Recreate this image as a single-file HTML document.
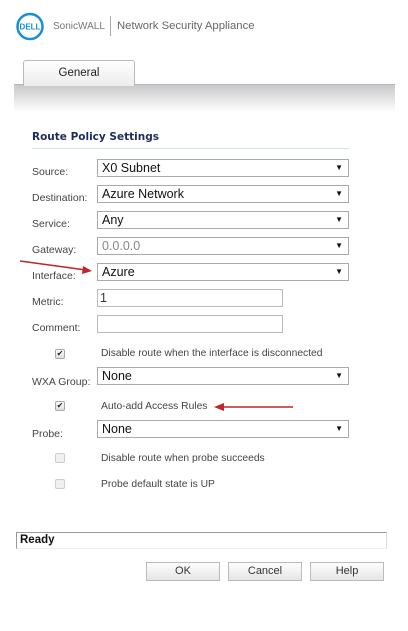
<!DOCTYPE html>
<html><head><meta charset="utf-8"><style>
*{margin:0;padding:0;box-sizing:border-box}
body{width:408px;height:631px;background:#fff;position:relative;overflow:hidden;font-family:"Liberation Sans",sans-serif;color:#333}
.a{position:absolute;white-space:nowrap}
.lbl{font-size:10.5px;color:#444}
.sel{position:absolute;left:97px;width:252px;height:18px;border:1px solid #aaa;background:#fff;font-size:12.5px;color:#111;padding-left:4px;line-height:16px}
.sel:after{content:"\25BC";position:absolute;right:5px;top:0;font-size:8px;color:#111}
.inp{position:absolute;left:97px;width:186px;height:18px;border:1px solid #bbb;background:#fff;font-size:12.5px;padding-left:2px;line-height:16px}
.cb{position:absolute;left:55px;width:10px;height:10px;border:1px solid #aaa;border-radius:2px;background:linear-gradient(#fff,#ddd);font-size:8px;line-height:8px;text-align:center;color:#222;font-family:"DejaVu Sans",sans-serif}
.cb.off{border-color:#ccc;background:#f0f0f0}
.ct{position:absolute;left:101px;font-size:10.3px;color:#444}
.btn{position:absolute;top:562px;width:74px;height:19px;border:1px solid #bbb;background:linear-gradient(#fdfdfd,#e6e6e6);font-size:11px;text-align:center;line-height:17px;color:#333}
</style></head><body>
<svg class="a" style="left:15px;top:12px" width="30" height="30"><circle cx="15" cy="14.5" r="12.5" fill="#fff" stroke="#1a8fd6" stroke-width="2.5"/><text x="15" y="17.5" font-family="Liberation Sans" font-weight="bold" font-size="8" fill="#1a8fd6" text-anchor="middle">DELL</text></svg>
<div class="a" style="left:53px;top:21px;font-size:10px;color:#777">SonicWALL</div>
<div class="a" style="left:110px;top:16px;width:1px;height:20px;background:#aaa"></div>
<div class="a" style="left:117px;top:20px;font-size:11.3px;color:#666">Network Security Appliance</div>
<div class="a" style="left:14px;top:84px;width:381px;height:28px;background:linear-gradient(#c9c9c9,#f4f4f4 80%,#fff);border-top:1px solid #b5b5c5"></div>
<div class="a" style="left:23px;top:60px;width:112px;height:26px;border:1px solid #bbb;border-bottom:none;border-radius:3px 3px 0 0;background:linear-gradient(#fff,#ececec);font-size:11.5px;text-align:center;line-height:24px;color:#222">General</div>
<div class="a" style="left:32px;top:131px;font-size:10.5px;font-weight:bold;color:#1c2d5c;font-family:'DejaVu Sans',sans-serif">Route Policy Settings</div>
<div class="a" style="left:32px;top:148px;width:317px;height:1px;background:#cfe0ee"></div>

<div class="a lbl" style="left:32px;top:166px">Source:</div>
<div class="sel" style="top:159px">X0 Subnet</div>
<div class="a lbl" style="left:32px;top:192px">Destination:</div>
<div class="sel" style="top:185px">Azure Network</div>
<div class="a lbl" style="left:32px;top:218px">Service:</div>
<div class="sel" style="top:211px">Any</div>
<div class="a lbl" style="left:32px;top:244px">Gateway:</div>
<div class="sel" style="top:237px;color:#888">0.0.0.0</div>
<div class="a lbl" style="left:32px;top:270px">Interface:</div>
<div class="sel" style="top:263px">Azure</div>
<div class="a lbl" style="left:32px;top:296px">Metric:</div>
<div class="inp" style="top:289px">1</div>
<div class="a lbl" style="left:32px;top:322px">Comment:</div>
<div class="inp" style="top:315px"></div>

<div class="cb" style="top:349px">✔</div>
<div class="ct" style="top:348px">Disable route when the interface is disconnected</div>
<div class="a lbl" style="left:32px;top:376px">WXA Group:</div>
<div class="sel" style="top:367px">None</div>
<div class="cb" style="top:401px">✔</div>
<div class="ct" style="top:401px">Auto-add Access Rules</div>
<div class="a lbl" style="left:32px;top:428px">Probe:</div>
<div class="sel" style="top:420px">None</div>
<div class="cb off" style="top:453px"></div>
<div class="ct" style="top:453px">Disable route when probe succeeds</div>
<div class="cb off" style="top:479px"></div>
<div class="ct" style="top:479px">Probe default state is UP</div>

<svg class="a" style="left:0;top:0" width="408" height="631">
<line x1="20" y1="261" x2="86" y2="270" stroke="#c0262a" stroke-width="1.6"/>
<polygon points="92,271 83,266 82,274" fill="#c0262a"/>
<line x1="222" y1="407" x2="293" y2="407" stroke="#c0262a" stroke-width="1.6"/>
<polygon points="214,407 224,403 224,411" fill="#c0262a"/>
</svg>

<div class="a" style="left:16px;top:532px;width:371px;height:17px;border-top:1px solid #999;border-left:1px solid #999;border-right:1px solid #ddd;border-bottom:1px solid #eee;font-size:11.5px;font-weight:bold;color:#111;padding-left:3px;line-height:15px">Ready</div>
<div class="btn" style="left:146px">OK</div>
<div class="btn" style="left:228px">Cancel</div>
<div class="btn" style="left:310px">Help</div>
</body></html>
